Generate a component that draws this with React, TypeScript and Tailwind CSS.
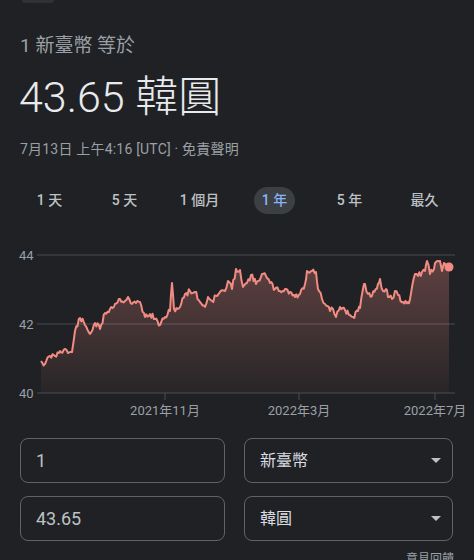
import React from "react";

const FONT = "font-['Roboto','Noto_Sans_CJK_TC',sans-serif]";

// key points of the 1-year curve, in page pixels
const KEYS: [number, number][] = [
  [41, 362], [45, 365], [50, 357], [55, 357], [60, 352], [65, 350], [68, 354],
  [72, 353], [75, 332], [80, 319], [85, 326], [90, 335], [95, 324], [100, 330],
  [105, 314], [110, 310], [115, 305], [120, 300], [125, 302], [128, 298],
  [132, 305], [140, 303], [145, 318], [150, 315], [155, 320], [160, 326],
  [165, 318], [170, 312], [172, 284], [174, 310], [180, 308], [185, 295],
  [190, 292], [195, 293], [200, 303], [205, 308], [208, 298], [212, 302],
  [220, 293], [225, 292], [228, 282], [232, 290], [236, 270], [240, 271],
  [243, 288], [247, 284], [251, 276], [256, 285], [262, 275], [266, 277],
  [270, 284], [275, 290], [280, 292], [285, 290], [290, 293], [295, 298],
  [300, 295], [305, 285], [307, 272], [312, 272], [316, 273], [318, 290],
  [322, 300], [325, 305], [330, 312], [333, 310], [336, 318], [340, 308],
  [345, 311], [350, 316], [353, 318], [358, 312], [360, 309], [363, 290],
  [365, 285], [368, 295], [372, 297], [378, 285], [380, 280], [383, 292],
  [386, 290], [388, 298], [392, 300], [395, 292], [398, 296], [403, 303],
  [408, 303], [410, 300], [412, 288], [415, 275], [418, 277], [422, 273],
  [425, 272], [427, 262], [430, 275], [434, 270], [436, 263], [440, 262],
  [442, 272], [444, 264], [446, 268], [449, 268],
];

function buildLine() {
  let seed = 11;
  const rand = () => {
    seed = (seed * 9301 + 49297) % 233280;
    return seed / 233280;
  };
  const pts: [number, number][] = [];
  for (let i = 0; i < KEYS.length - 1; i++) {
    const [x0, y0] = KEYS[i];
    const [x1, y1] = KEYS[i + 1];
    const steps = Math.max(1, Math.round((x1 - x0) / 1.3));
    for (let s = 0; s < steps; s++) {
      const t = s / steps;
      const j = s === 0 ? 0 : (rand() - 0.5) * 6;
      pts.push([x0 + (x1 - x0) * t, y0 + (y1 - y0) * t + j]);
    }
  }
  pts.push(KEYS[KEYS.length - 1]);
  return pts.map(([x, y], i) => `${i ? "L" : "M"}${x.toFixed(1)} ${y.toFixed(1)}`).join(" ");
}

const LINE = buildLine();

const RANGES = ["1 天", "5 天", "1 個月", "1 年", "5 年", "最久"];

function Chart() {
  return (
    <svg width={474} height={200} viewBox="0 224 474 200" className="block">
      <defs>
        <linearGradient id="fill" x1="0" y1="0" x2="0" y2="1">
          <stop offset="0%" stopColor="#f28b82" stopOpacity={0.3} />
          <stop offset="100%" stopColor="#f28b82" stopOpacity={0.04} />
        </linearGradient>
      </defs>
      {[256, 325, 394].map((y) => (
        <line key={y} x1={37} x2={455} y1={y} y2={y} stroke="#4a4d52" strokeWidth={1} />
      ))}
      {[165, 299, 435].map((x) => (
        <line key={x} x1={x} x2={x} y1={394} y2={401} stroke="#4a4d52" strokeWidth={1} />
      ))}
      <path d={`${LINE} L449 394 L41 394 Z`} fill="url(#fill)" />
      <path d={LINE} fill="none" stroke="#f28b82" strokeWidth={2} strokeLinejoin="round" />
      <circle cx={449} cy={268} r={4.5} fill="#f28b82" />
      <g fill="#9aa0a6" fontSize={13} fontFamily="Roboto, 'Noto Sans CJK TC', sans-serif">
        <text x={19} y={260.5}>44</text>
        <text x={19} y={329.5}>42</text>
        <text x={19} y={398.5}>40</text>
        <text x={165} y={416} textAnchor="middle">2021年11月</text>
        <text x={299} y={416} textAnchor="middle">2022年3月</text>
        <text x={435} y={416} textAnchor="middle">2022年7月</text>
      </g>
    </svg>
  );
}

function Caret() {
  return (
    <svg width={10} height={5} viewBox="0 0 10 5">
      <path d="M0 0 L10 0 L5 5 Z" fill="#bdc1c6" />
    </svg>
  );
}

export default function App() {
  return (
    <div className={`w-[474px] h-[560px] overflow-hidden bg-[#202124] ${FONT}`}>
      <div className="ml-[22px] h-[3px] w-[32px] rounded-b-sm bg-[#2f3134]" />

      <div className="mt-[31px] pl-[20px] text-[19px] leading-[24px] text-[#9aa0a6]">1 新臺幣 等於</div>
      <div className="mt-[13px] pl-[19px] text-[43px] font-light leading-[52px] text-[#e8eaed]">43.65 韓圓</div>
      <div className="mt-[16px] pl-[20px] text-[14px] tracking-[0.2px] leading-[20px] text-[#9aa0a6]">
        7月13日 上午4:16 [UTC] · 免責聲明
      </div>

      <div className="mt-[28px] grid grid-cols-6 px-[12px]">
        {RANGES.map((r) => (
          <div key={r} className="flex justify-center">
            <span
              className={
                r === "1 年"
                  ? "h-[27px] rounded-full bg-[#3c4043] px-[8px] text-[14px] leading-[27px] font-medium text-[#8ab4f8]"
                  : "h-[27px] text-[14px] leading-[27px] font-medium text-[#bdc1c6]"
              }
            >
              {r}
            </span>
          </div>
        ))}
      </div>

      <div className="mt-[9px]">
        <Chart />
      </div>

      <div className="mt-[15px] flex flex-col gap-[13px] pl-[20px] pr-[21px]">
        {[
          ["1", "新臺幣"],
          ["43.65", "韓圓"],
        ].map(([v, c]) => (
          <div key={c} className="flex gap-[19px]">
            <div className="flex h-[45px] w-[205px] items-center rounded-[8px] border border-[#5f6368] pl-[15px] text-[18px] text-[#bdc1c6]">
              {v}
            </div>
            <div className="flex h-[45px] flex-1 items-center justify-between rounded-[8px] border border-[#5f6368] pl-[15px] pr-[11px] text-[16px] text-[#dadce0]">
              <span>{c}</span>
              <Caret />
            </div>
          </div>
        ))}
      </div>

      <div className="mt-[9px] pr-[20px] text-right text-[12px] text-[#9aa0a6]">意見回饋</div>
    </div>
  );
}
